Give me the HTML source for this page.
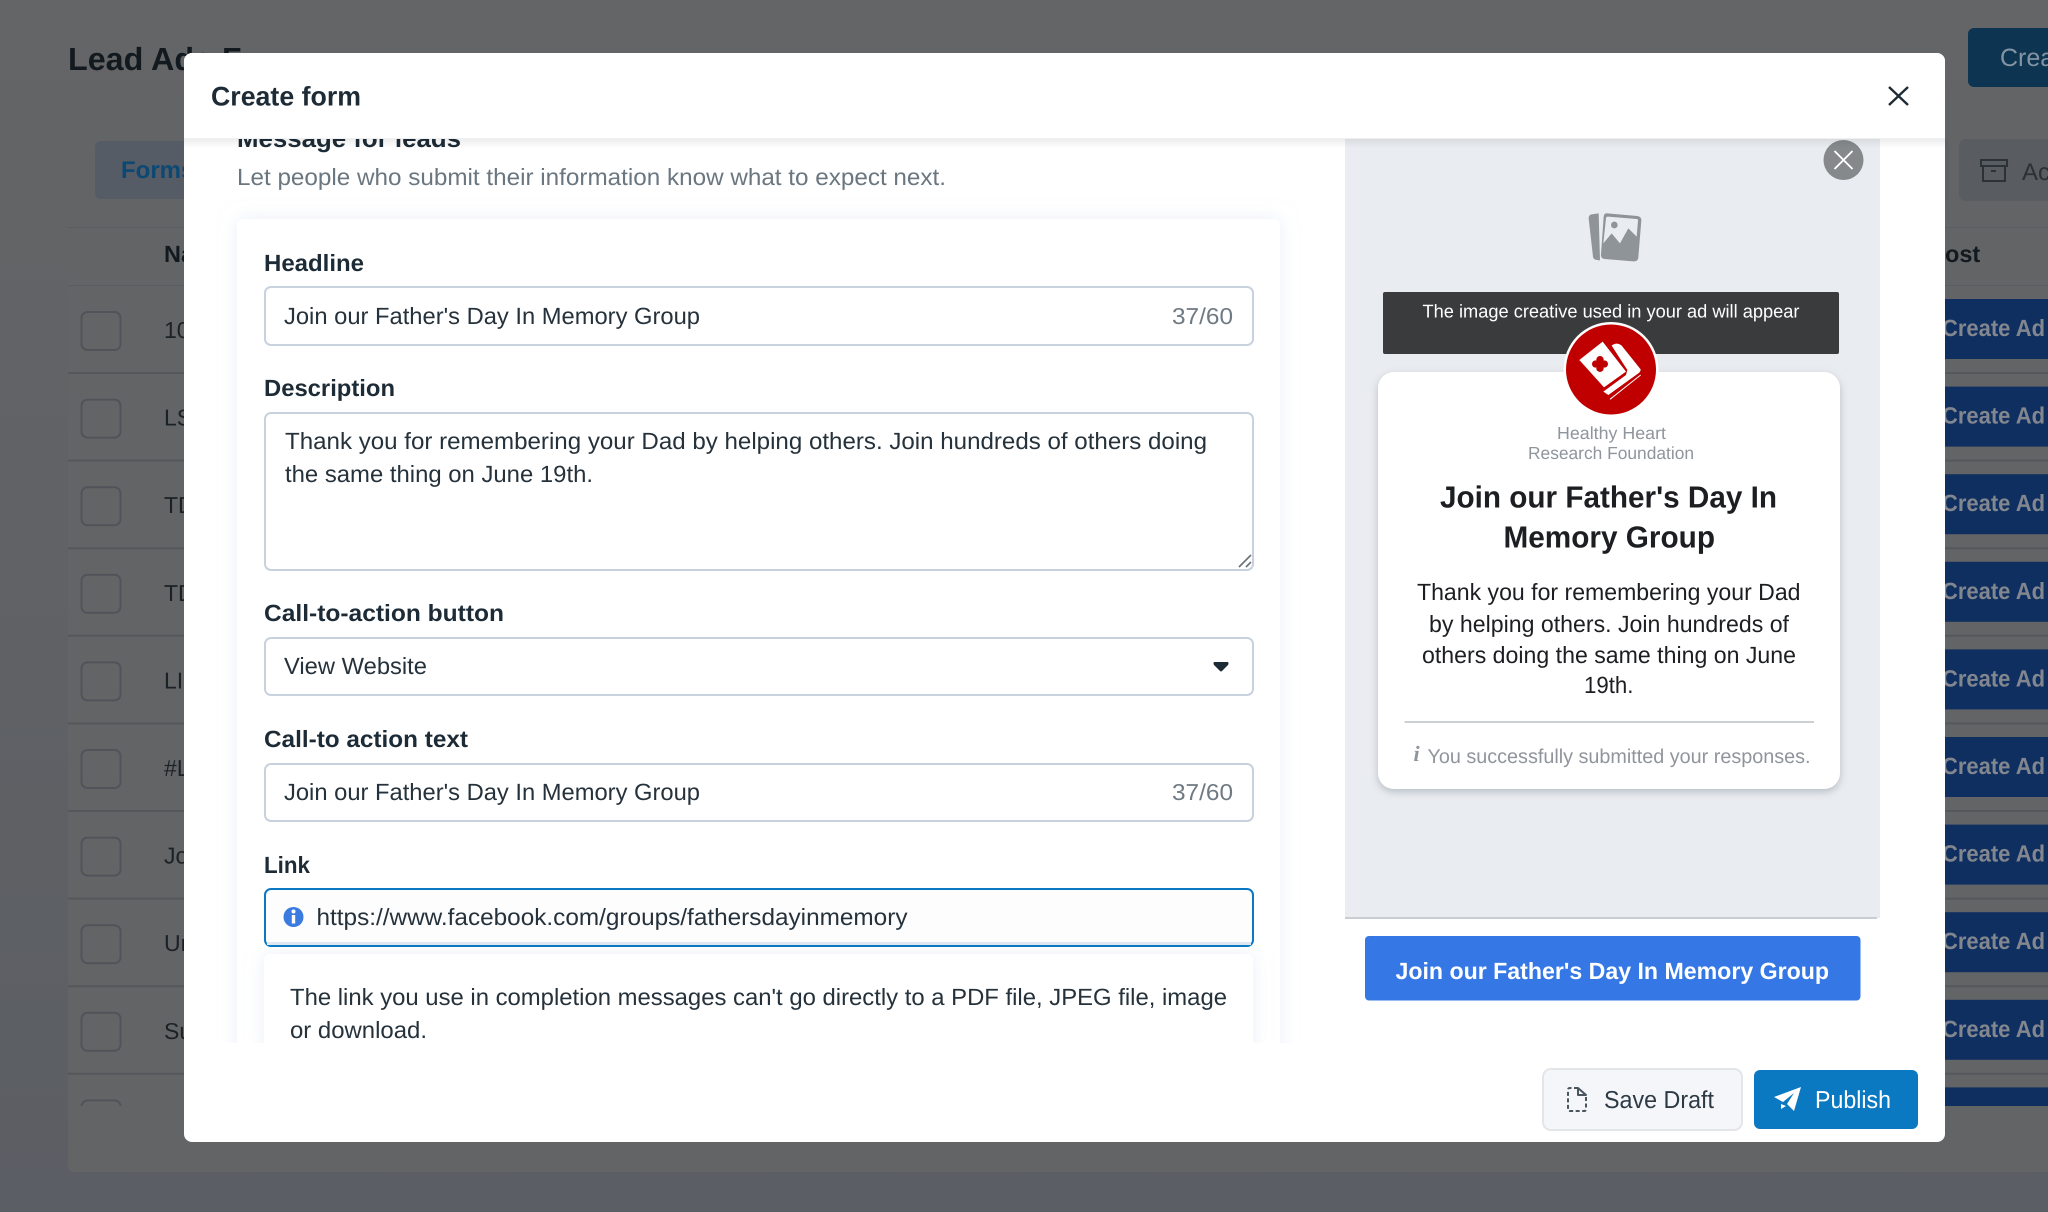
<!DOCTYPE html>
<html lang="en">
<head>
<meta charset="utf-8">
<title>Create form</title>
<style>
html,body{margin:0;padding:0;background:#5e6064;width:2048px;height:1212px;overflow:hidden}
svg{display:block}
text{font-family:"Liberation Sans",Arial,sans-serif;text-rendering:geometricPrecision}
.lb{font-size:23.500px;font-weight:700;fill:#1d2b36}
.v{font-size:23.500px;fill:#26323b}
.cnt{font-size:23px;fill:#6f7a83}
.rt{font-size:23px;fill:#1a2228}
.ca{font-size:23.500px;font-weight:700;fill:#82868e}
.bd{font-size:23.500px;fill:#1c1e21}
.ttl{font-size:30.500px;font-weight:700;fill:#1c1e21}
</style>
</head>
<body>
<svg xmlns="http://www.w3.org/2000/svg" width="2048" height="1212" viewBox="0 0 2048 1212">
<defs>
<linearGradient id="bg" x1="0" y1="0" x2="0" y2="1"><stop offset="0" stop-color="#646566"/><stop offset="1" stop-color="#5b5e64"/></linearGradient>
<linearGradient id="hs" x1="0" y1="0" x2="0" y2="1"><stop offset="0" stop-color="#000" stop-opacity=".07"/><stop offset="1" stop-color="#000" stop-opacity="0"/></linearGradient>
<filter id="cs" x="-10%" y="-10%" width="120%" height="120%"><feDropShadow dx="0" dy="3" stdDeviation="4" flood-color="#7d8794" flood-opacity=".45"/></filter>
<filter id="halo" x="-5%" y="-5%" width="110%" height="110%"><feDropShadow dx="0" dy="0" stdDeviation="9" flood-color="#dfe5f3" flood-opacity=".6"/></filter>
<clipPath id="body"><rect x="184" y="139" width="1761" height="904"/></clipPath>
<clipPath id="list"><rect x="68" y="114" width="1980" height="992"/></clipPath>
</defs>

<!-- page behind the overlay -->
<rect width="2048" height="1212" fill="url(#bg)"/>
<text x="68" y="70" font-size="32" font-weight="700" fill="#12191f" textLength="144" lengthAdjust="spacingAndGlyphs">Lead Ads</text>
<text x="222" y="70" font-size="32" font-weight="700" fill="#12191f">F</text>
<rect x="1968" y="28" width="100" height="59" rx="6" fill="#0d3451"/>
<text x="2000" y="66" font-size="25" fill="#8294a2">Create</text>
<rect x="68" y="114" width="1990" height="1058" rx="6" fill="#636465"/>
<rect x="95" y="141" width="130" height="58" rx="6" fill="#565c66"/>
<text x="121" y="178" font-size="24" font-weight="700" fill="#0b4873">Forms</text>
<rect x="1940" y="139" width="9" height="62" rx="4" fill="#5f6163"/>
<rect x="1959" y="139" width="110" height="62" rx="7" fill="#595c60"/>
<g fill="none" stroke="#2b3238" stroke-width="2"><rect x="1981" y="160" width="26" height="6"/><rect x="1983" y="166" width="22" height="15"/><path d="M1991 171h5"/></g>
<text x="2022" y="180" font-size="24" fill="#2a3036">Ac</text>
<rect x="68" y="227" width="1980" height="1" fill="#5a5c5f"/>
<rect x="68" y="285" width="1980" height="1" fill="#5a5c5f"/>
<text x="164" y="262" class="lb" style="fill:#12191f">Name</text>
<text x="1945" y="262" class="lb" style="fill:#12191f">ost</text>
<g clip-path="url(#list)">
<g stroke="#54575b" stroke-width="2">
<path d="M68 373H2048M68 460.600H2048M68 548.200H2048M68 635.800H2048M68 723.400H2048M68 811H2048M68 898.600H2048M68 986.200H2048M68 1073.800H2048"/>
</g>
<g fill="none" stroke="#50545a" stroke-width="2">
<rect x="81.500" y="312" width="39" height="38" rx="6"/><rect x="81.500" y="399.600" width="39" height="38" rx="6"/><rect x="81.500" y="487.200" width="39" height="38" rx="6"/><rect x="81.500" y="574.800" width="39" height="38" rx="6"/><rect x="81.500" y="662.400" width="39" height="38" rx="6"/><rect x="81.500" y="750" width="39" height="38" rx="6"/><rect x="81.500" y="837.600" width="39" height="38" rx="6"/><rect x="81.500" y="925.200" width="39" height="38" rx="6"/><rect x="81.500" y="1012.800" width="39" height="38" rx="6"/><rect x="81.500" y="1100.400" width="39" height="38" rx="6"/>
</g>
<g fill="#0f2f60">
<rect x="1940" y="299" width="108" height="60"/><rect x="1940" y="386.600" width="108" height="60"/><rect x="1940" y="474.200" width="108" height="60"/><rect x="1940" y="561.800" width="108" height="60"/><rect x="1940" y="649.400" width="108" height="60"/><rect x="1940" y="737" width="108" height="60"/><rect x="1940" y="824.600" width="108" height="60"/><rect x="1940" y="912.200" width="108" height="60"/><rect x="1940" y="999.800" width="108" height="60"/><rect x="1940" y="1087.400" width="108" height="60"/>
</g>
</g>
<text x="164" y="338" class="rt">10</text>
<text x="164" y="425.600" class="rt">LS</text>
<text x="164" y="513" class="rt">TD</text>
<text x="164" y="600.800" class="rt">TD</text>
<text x="164" y="688.400" class="rt">LI</text>
<text x="164" y="776" class="rt">#L</text>
<text x="164" y="863.600" class="rt">Jo</text>
<text x="164" y="951" class="rt">Un</text>
<text x="164" y="1038.800" class="rt">Su</text>
<text x="1942" y="336" class="ca" textLength="103" lengthAdjust="spacingAndGlyphs">Create Ad</text>
<text x="1942" y="423.600" class="ca" textLength="103" lengthAdjust="spacingAndGlyphs">Create Ad</text>
<text x="1942" y="511.200" class="ca" textLength="103" lengthAdjust="spacingAndGlyphs">Create Ad</text>
<text x="1942" y="598.800" class="ca" textLength="103" lengthAdjust="spacingAndGlyphs">Create Ad</text>
<text x="1942" y="686.400" class="ca" textLength="103" lengthAdjust="spacingAndGlyphs">Create Ad</text>
<text x="1942" y="774" class="ca" textLength="103" lengthAdjust="spacingAndGlyphs">Create Ad</text>
<text x="1942" y="861.600" class="ca" textLength="103" lengthAdjust="spacingAndGlyphs">Create Ad</text>
<text x="1942" y="949.200" class="ca" textLength="103" lengthAdjust="spacingAndGlyphs">Create Ad</text>
<text x="1942" y="1036.800" class="ca" textLength="103" lengthAdjust="spacingAndGlyphs">Create Ad</text>

<!-- modal -->
<rect x="184" y="53" width="1761" height="1089" rx="8" fill="#fff"/>

<g clip-path="url(#body)">
<text x="237" y="147" font-size="25" font-weight="700" fill="#1d2b36" textLength="224" lengthAdjust="spacingAndGlyphs">Message for leads</text>
<text x="237" y="185" font-size="23.500" fill="#6b7780" textLength="709" lengthAdjust="spacingAndGlyphs">Let people who submit their information know what to expect next.</text>

<rect x="237" y="219" width="1043" height="860" rx="6" fill="#fff" filter="url(#halo)"/>

<text x="264" y="271" class="lb" textLength="100" lengthAdjust="spacingAndGlyphs">Headline</text>
<rect x="265" y="287" width="988" height="58" rx="6" fill="#fff" stroke="#c8d2de" stroke-width="2"/>
<text x="284" y="324" class="v" textLength="416" lengthAdjust="spacingAndGlyphs">Join our Father's Day In Memory Group</text>
<text x="1172" y="324" class="cnt" textLength="61" lengthAdjust="spacingAndGlyphs">37/60</text>

<text x="264" y="396" class="lb" textLength="131" lengthAdjust="spacingAndGlyphs">Description</text>
<rect x="265" y="413" width="988" height="157" rx="6" fill="#fff" stroke="#c8d2de" stroke-width="2"/>
<text x="285" y="449" class="v" textLength="922" lengthAdjust="spacingAndGlyphs">Thank you for remembering your Dad by helping others. Join hundreds of others doing</text>
<text x="285" y="482" class="v" textLength="308" lengthAdjust="spacingAndGlyphs">the same thing on June 19th.</text>
<path d="M1239 567L1251 555M1246 567L1251 562" stroke="#6a7075" stroke-width="1.600" fill="none"/>

<text x="264" y="621" class="lb" textLength="240" lengthAdjust="spacingAndGlyphs">Call-to-action button</text>
<rect x="265" y="638" width="988" height="57" rx="6" fill="#fff" stroke="#c8d2de" stroke-width="2"/>
<text x="284" y="674" class="v" textLength="143" lengthAdjust="spacingAndGlyphs">View Website</text>
<path d="M1214 662H1228Q1229 663 1228 665L1222 671Q1221 672 1220 671L1214 665Q1213 663 1214 662Z" fill="#1c2b36"/>

<text x="264" y="747" class="lb" textLength="204" lengthAdjust="spacingAndGlyphs">Call-to action text</text>
<rect x="265" y="764" width="988" height="57" rx="6" fill="#fff" stroke="#c8d2de" stroke-width="2"/>
<text x="284" y="800" class="v" textLength="416" lengthAdjust="spacingAndGlyphs">Join our Father's Day In Memory Group</text>
<text x="1172" y="800" class="cnt" textLength="61" lengthAdjust="spacingAndGlyphs">37/60</text>

<text x="264" y="873" class="lb" textLength="46" lengthAdjust="spacingAndGlyphs">Link</text>
<rect x="265" y="889" width="988" height="57" rx="6" fill="#fdfdfe" stroke="#0b78c2" stroke-width="2"/>
<rect x="267" y="942" width="984" height="3" fill="#dfe7f2"/>
<circle cx="293.500" cy="917" r="10" fill="#3b7be0"/>
<rect x="291.800" y="915" width="3.400" height="8.500" fill="#fff"/>
<circle cx="293.500" cy="911.500" r="2" fill="#fff"/>
<text x="316.500" y="925" class="v" textLength="591" lengthAdjust="spacingAndGlyphs">https://www.facebook.com/groups/fathersdayinmemory</text>

<rect x="264" y="954" width="989" height="100" rx="6" fill="#fff" filter="url(#halo)"/>
<text x="290" y="1005" class="v" textLength="937" lengthAdjust="spacingAndGlyphs">The link you use in completion messages can't go directly to a PDF file, JPEG file, image</text>
<text x="290" y="1038" class="v" textLength="137" lengthAdjust="spacingAndGlyphs">or download.</text>

<!-- preview -->
<rect x="1345" y="139" width="535" height="779" fill="#e9ecf0"/>
<rect x="1345" y="917" width="532" height="2" fill="#c9ced4"/>
<circle cx="1843.500" cy="160" r="20" fill="#85898c"/>
<path d="M1834.500 151L1852.500 169M1852.500 151L1834.500 169" stroke="#fff" stroke-width="1.800" fill="none"/>

<g transform="translate(1520 200) scale(.3333)">
<path d="M236 40L214 43Q206 45 206 55L219 170Q220 180 232 180L240 181Z" fill="#8f9499"/>
<path d="M262 40L352 48Q365 50 364 62L355 172Q354 185 340 184L254 177Q242 176 243 163L251 50Q252 39 262 40Z" fill="#8f9499"/>
<path d="M264 50L350 57Q355 58 354 63L350 110L325 85L300 130L275 100L250 130L258 55Q258 50 264 50Z" fill="#e9ecf0"/>
<circle cx="283" cy="75" r="10" fill="#8f9499"/>
</g>

<rect x="1383" y="292" width="456" height="62" rx="2" fill="#3a3b3d"/>
<text x="1422.500" y="317.500" font-size="18.500" fill="#fff" textLength="377" lengthAdjust="spacingAndGlyphs">The image creative used in your ad will appear</text>

<rect x="1378" y="372" width="462" height="417" rx="16" fill="#fff" filter="url(#cs)"/>

<circle cx="1611" cy="369.500" r="47.500" fill="#fff"/>
<circle cx="1611" cy="369.500" r="45" fill="#c00000"/>
<g transform="translate(1520 200) scale(.3333)">
<path d="M178 480L248 425L318 515L252 562Z" fill="#fff"/>
<g fill="#c00000"><circle cx="240" cy="479" r="11"/><circle cx="240" cy="505" r="11"/><circle cx="227" cy="492" r="11"/><circle cx="253" cy="492" r="11"/><rect x="230" y="482" width="20" height="20"/></g>
<path d="M275 437Q290 425 305 437L362 508Q362 515 355 520L265 585L250 575L318 525L322 510Z" fill="#fff"/>
<path d="M270 598L362 525" stroke="#fff" stroke-width="3" fill="none"/>
</g>

<text x="1557" y="439" font-size="17.500" fill="#8e959c" textLength="109" lengthAdjust="spacingAndGlyphs">Healthy Heart</text>
<text x="1528" y="459" font-size="17.500" fill="#8e959c" textLength="166" lengthAdjust="spacingAndGlyphs">Research Foundation</text>

<text x="1440" y="507.500" class="ttl" textLength="337" lengthAdjust="spacingAndGlyphs">Join our Father's Day In</text>
<text x="1503.500" y="547.500" class="ttl" textLength="211.500" lengthAdjust="spacingAndGlyphs">Memory Group</text>

<text x="1417" y="600" class="bd" textLength="383.500" lengthAdjust="spacingAndGlyphs">Thank you for remembering your Dad</text>
<text x="1429" y="632" class="bd" textLength="360" lengthAdjust="spacingAndGlyphs">by helping others. Join hundreds of</text>
<text x="1422" y="663" class="bd" textLength="374" lengthAdjust="spacingAndGlyphs">others doing the same thing on June</text>
<text x="1584" y="693" class="bd" textLength="49.500" lengthAdjust="spacingAndGlyphs">19th.</text>

<rect x="1404.500" y="721" width="409.500" height="2" fill="#ccd0d5"/>
<text x="1413.500" y="761" font-size="22" font-style="italic" font-weight="700" fill="#90949c" style="font-family:'Liberation Serif',serif">i</text>
<text x="1427.500" y="763" font-size="20" fill="#90949c" textLength="383" lengthAdjust="spacingAndGlyphs">You successfully submitted your responses.</text>

<rect x="1365" y="936" width="495.500" height="64.500" rx="4" fill="#3578e5"/>
<text x="1395.500" y="979" font-size="23.500" font-weight="700" fill="#fff" textLength="433.500" lengthAdjust="spacingAndGlyphs">Join our Father's Day In Memory Group</text>
</g>

<!-- header -->
<rect x="184" y="139" width="1761" height="9" fill="url(#hs)"/>
<rect x="184" y="53" width="1761" height="86" rx="8" fill="#fff"/>
<rect x="184" y="138" width="1761" height="1" fill="#eef0f2"/>
<text x="211" y="105.500" font-size="27" font-weight="700" fill="#1d2b36" textLength="150" lengthAdjust="spacingAndGlyphs">Create form</text>
<path d="M1889 87L1908 105M1908 87L1889 105" stroke="#1d2b36" stroke-width="2.400" fill="none"/>

<!-- footer -->
<rect x="1543" y="1069" width="199" height="61" rx="8" fill="#f5f6f9" stroke="#e3e5e9" stroke-width="2"/>
<path d="M1578 1088H1570Q1568 1088 1568 1090V1109Q1568 1111 1570 1111H1584Q1586 1111 1586 1109V1095" fill="none" stroke="#4a555e" stroke-width="2" stroke-dasharray="4 2.500"/>
<path d="M1578 1088L1586 1095H1578Z" fill="none" stroke="#4a555e" stroke-width="2" stroke-linejoin="round"/>
<text x="1604" y="1108" font-size="24.500" fill="#2c3a45" textLength="110" lengthAdjust="spacingAndGlyphs">Save Draft</text>
<rect x="1754" y="1070" width="164" height="59" rx="6" fill="#0b78c2"/>
<path d="M1801 1087L1774 1097L1783 1102L1794 1093L1787 1104L1794 1111Z" fill="#fff"/>
<path d="M1781 1104V1109L1786 1106Z" fill="#fff"/>
<text x="1815" y="1108" font-size="24.500" fill="#fff" textLength="76" lengthAdjust="spacingAndGlyphs">Publish</text>
</svg>
</body>
</html>
